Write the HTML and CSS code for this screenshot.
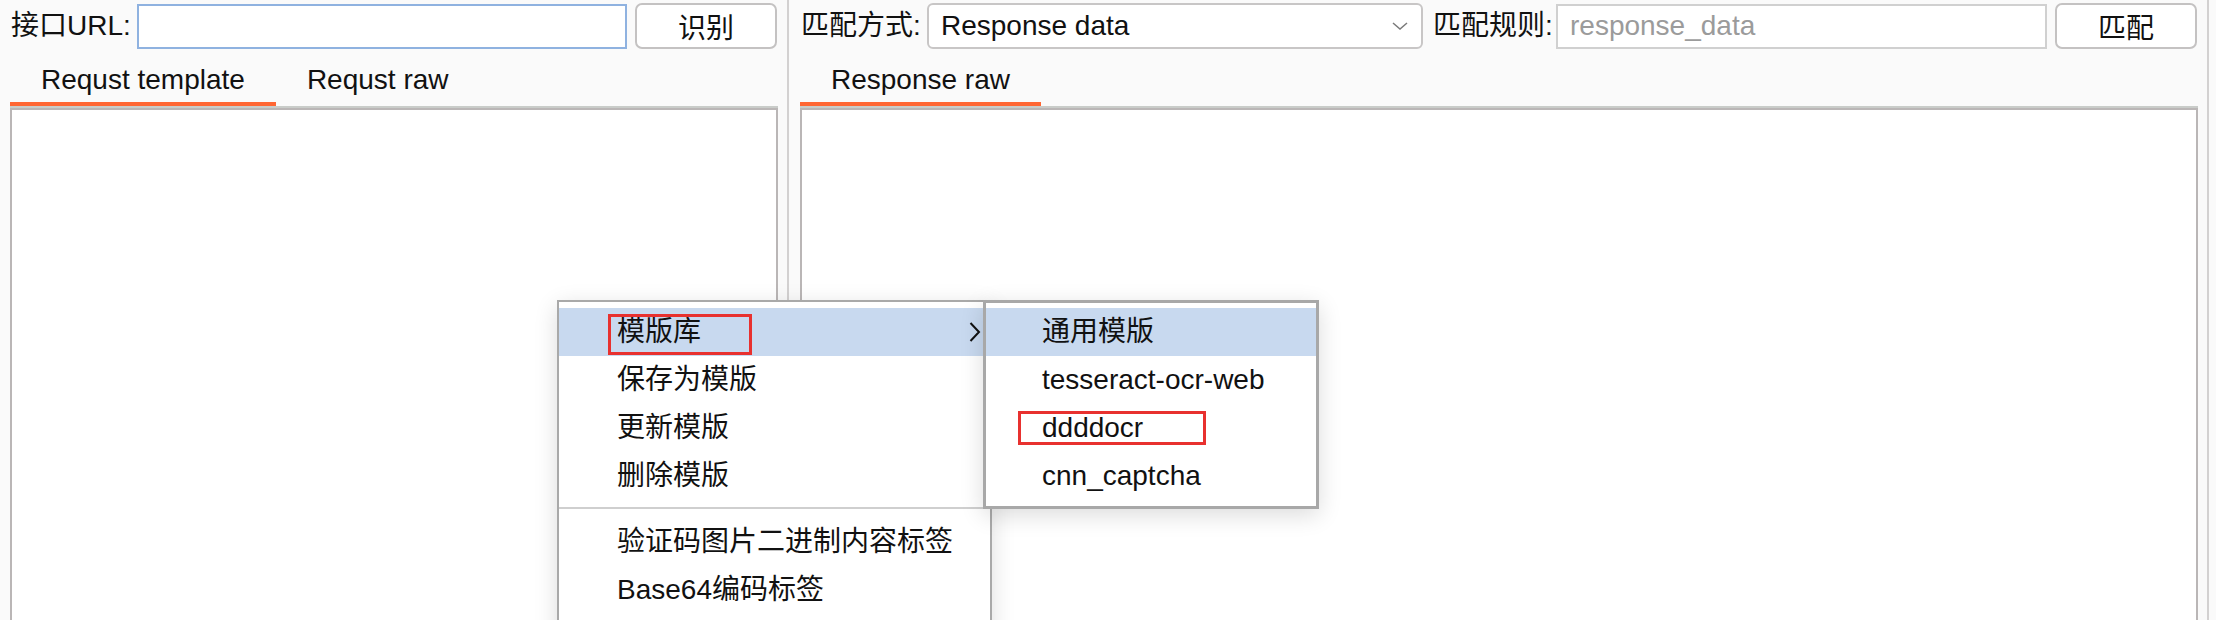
FILE: index.html
```html
<!DOCTYPE html>
<html lang="zh">
<head>
<meta charset="utf-8">
<title>验证码识别</title>
<link rel="stylesheet" href="styles.css">
</head>
<body>
<div class="app">
  <section class="panel panel-left">
    <div class="toolbar">
      <label class="label label-url">接口URL:</label>
      <input class="field field-url" type="text">
      <button class="btn">识别</button>
    </div>
    <div class="tabs">
      <div class="tab active">Requst template</div>
      <div class="tab">Requst raw</div>
    </div>
    <div class="editor"></div>
  </section>
  <section class="panel panel-right">
    <div class="toolbar">
      <label class="label label-mode">匹配方式:</label>
      <div class="select">
        <span>Response data</span>
        <svg class="chev" width="16" height="8" viewBox="0 0 16 8"><path d="M1 1 L8 7 L15 1" fill="none" stroke="#7a7a7a" stroke-width="1.5"/></svg>
      </div>
      <label class="label label-rule">匹配规则:</label>
      <input class="field field-rule" type="text" placeholder="response_data">
      <button class="btn">匹配</button>
    </div>
    <div class="tabs">
      <div class="tab active tab-resp">Response raw</div>
    </div>
    <div class="editor"></div>
  </section>
</div>

<div class="menu menu-main">
  <div class="item hl">模版库<span class="mark mark-lib"></span>
    <svg class="arrow" width="12" height="20" viewBox="0 0 12 20"><path d="M1.5 1 L10 10 L1.5 19" fill="none" stroke="#111" stroke-width="2"/></svg>
  </div>
  <div class="item">保存为模版</div>
  <div class="item">更新模版</div>
  <div class="item">删除模版</div>
  <div class="sep"></div>
  <div class="item">验证码图片二进制内容标签</div>
  <div class="item">Base64编码标签</div>
</div>

<div class="menu menu-sub">
  <div class="item hl">通用模版</div>
  <div class="item">tesseract-ocr-web</div>
  <div class="item">ddddocr<span class="mark mark-dd"></span></div>
  <div class="item">cnn_captcha</div>
</div>
</body>
</html>
```

FILE: styles.css
```css
html, body {
  margin: 0;
  padding: 0;
}
body {
  width: 2216px;
  height: 620px;
  overflow: hidden;
  background: #fafafa;
  font-family: "Liberation Sans", "Noto Sans CJK SC", sans-serif;
  font-size: 28px;
  color: #111;
  position: relative;
}
.app {
  display: flex;
  height: 620px;
}
.panel {
  display: flex;
  flex-direction: column;
  border-right: 2px solid #d3d1d1;
  box-sizing: border-box;
}
.panel-left {
  width: 789px;
  padding-left: 10px;
  padding-right: 9px;
}
.panel-right {
  width: 1420px;
  padding-left: 11px;
  padding-right: 9px;
}
.toolbar {
  display: flex;
  align-items: center;
  height: 46px;
  margin-top: 3px;
}
.label {
  flex: none;
  white-space: nowrap;
  line-height: 46px;
}
.label-url { width: 126px; padding-left: 1px; }
.label-mode { width: 126px; padding-left: 1px; }
.label-rule { width: 123px; margin-left: 10px; }
.field {
  flex: none;
  height: 45px;
  box-sizing: border-box;
  margin: 0;
  border: 2px solid #d0d0d0;
  background: #fff;
  font: inherit;
  padding: 0 12px;
  outline: none;
}
.field::placeholder { color: #9b9b9b; }
.field-url {
  width: 490px;
  border-color: #8fb2e0;
}
.field-rule { width: 491px; }
.btn {
  flex: none;
  width: 142px;
  height: 46px;
  margin-left: 8px;
  box-sizing: border-box;
  border: 2px solid #c4c2c2;
  border-radius: 7px;
  background: #fff;
  font: inherit;
  color: #111;
  padding: 0;
}
.select {
  flex: none;
  width: 496px;
  height: 46px;
  box-sizing: border-box;
  border: 2px solid #c8c6c6;
  border-radius: 6px;
  background: #fff;
  display: flex;
  align-items: center;
  justify-content: space-between;
  padding: 0 13px 0 12px;
}
.chev { display: block; }
.tabs {
  display: flex;
  margin-top: 8px;
  border-bottom: 2px solid #c9ccc9;
}
.tab {
  height: 45px;
  line-height: 45px;
  padding: 0 31px;
  border-bottom: 4px solid transparent;
  white-space: nowrap;
}
.tab.active { border-bottom-color: #ff6633; }
.editor {
  flex: 1;
  background: #fff;
  border: 2px solid #bab6b6;
  margin-bottom: -40px;
}

.menu {
  position: absolute;
  background: #fff;
  box-sizing: border-box;
  box-shadow: 0 6px 22px rgba(0, 0, 0, 0.14);
}
.menu-main {
  left: 557px;
  top: 300px;
  width: 435px;
  height: 360px;
  border: 2px solid #a9a9a9;
  padding-top: 6px;
}
.menu-sub {
  left: 983px;
  top: 300px;
  width: 336px;
  height: 209px;
  border: 3px solid #a8a8a8;
  padding-top: 5px;
}
.item {
  position: relative;
  height: 48px;
  line-height: 48px;
  white-space: nowrap;
}
.menu-main .item { padding-left: 58px; }
.menu-sub .item { padding-left: 56px; }
.item.hl { background: #c8d9ef; }
.sep {
  height: 18px;
  position: relative;
}
.sep::after {
  content: "";
  position: absolute;
  left: 0;
  right: 0;
  top: 7px;
  height: 2px;
  background: #cfcfcf;
}
.arrow {
  position: absolute;
  left: 410px;
  top: 14px;
}
.mark {
  position: absolute;
  border: 3px solid #e8312f;
  box-sizing: border-box;
}
.mark-lib {
  left: 49px;
  top: 6px;
  width: 144px;
  height: 41px;
}
.mark-dd {
  left: 32px;
  top: 7px;
  width: 188px;
  height: 34px;
}
```
